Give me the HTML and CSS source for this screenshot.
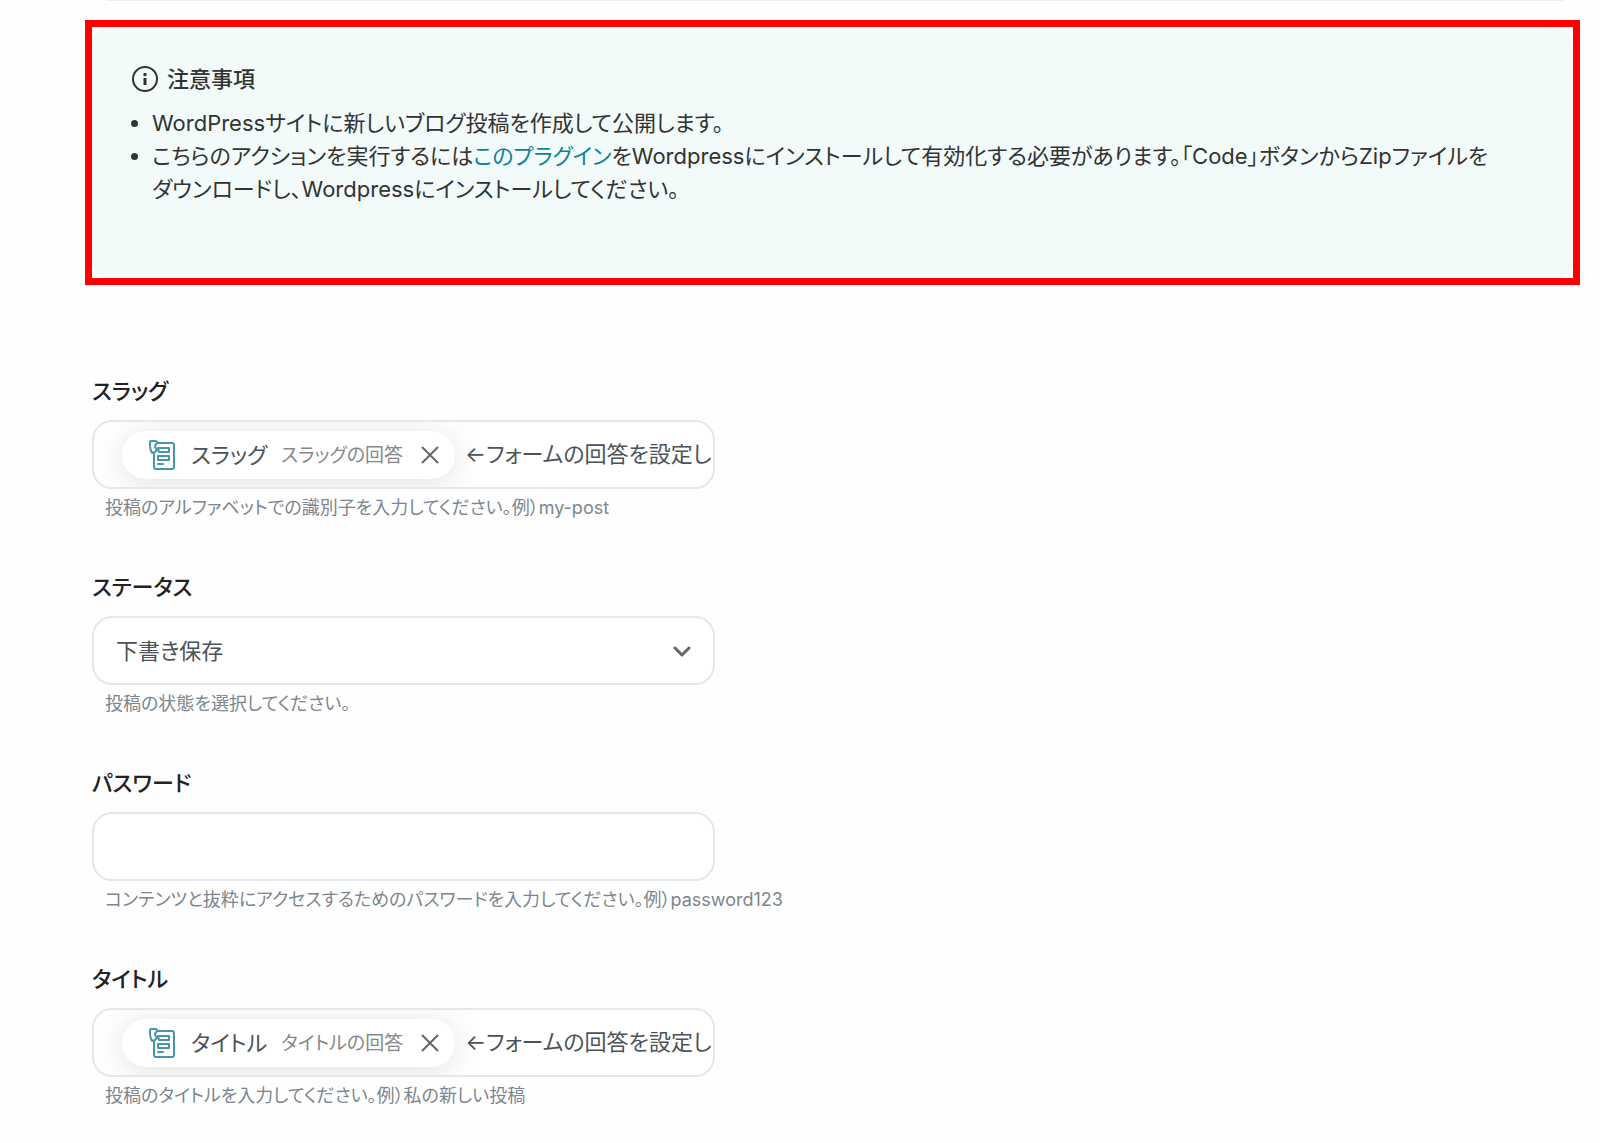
FILE: index.html
```html
<!DOCTYPE html>
<html lang="ja">

<head>
    <meta charset="UTF-8">
    <meta name="viewport" content="width=device-width, initial-scale=1.0">
    <title>WordPress 投稿の作成</title>
    <link rel="stylesheet" href="styles.css">
</head>

<body>
    <div class="divider"></div>
    <main class="content">
        <section class="notice">
            <div class="notice-inner">
                <h2 class="notice-title">
                    <svg class="info-icon" viewBox="0 0 26 26" fill="none" stroke="currentColor" stroke-width="2">
                        <circle cx="13" cy="13" r="12" />
                        <path d="M13 12v7" stroke-width="3" />
                        <path d="M13 7v3" stroke-width="3" />
                    </svg>
                    注意事項
                </h2>
                <ul class="notice-list">
                    <li>WordPressサイトに新しいブログ投稿を作成して公開します。</li>
                    <li>こちらのアクションを実行するには<a href="#">このプラグイン</a>をWordpressにインストールして有効化する必要があります。「Code」ボタンからZipファイルをダウンロードし、Wordpressにインストールしてください。</li>
                </ul>
            </div>
        </section>

        <form class="form">
            <div class="field">
                <label for="slug">スラッグ</label>
                <div class="control">
                    <span class="chip">
                        <svg class="form-icon" viewBox="0 0 26 30" fill="none" stroke="currentColor" stroke-width="2" stroke-linejoin="round" stroke-linecap="round">
                            <path d="M9 3h14q2 0 2 2v22q0 2-2 2H7q-2 0-2-2V14" />
                            <path d="M2 1h4q2 0 2 1v1q-2 2-2 4l2 3-2 2-3 1q-2-3-2-8V2q0-1 1-1z" />
                            <path d="M9 8h11v4H10zM9 16h11v4H9zM9 24h5" />
                        </svg>
                        <span class="chip-name">スラッグ</span>
                        <span class="chip-sub">スラッグの回答</span>
                        <button type="button" class="chip-close" aria-label="削除">
                            <svg viewBox="0 0 18 18" fill="none" stroke="currentColor" stroke-width="2"><path d="M1 1l16 16M17 1L1 17" /></svg>
                        </button>
                    </span>
                    <input type="text" id="slug" class="chip-input" value="←フォームの回答を設定し">
                </div>
                <p class="help">投稿のアルファベットでの識別子を入力してください。例）my-post</p>
            </div>

            <div class="field">
                <label for="status">ステータス</label>
                <div class="control">
                    <select id="status">
                        <option>下書き保存</option>
                    </select>
                    <svg class="chevron" viewBox="0 0 18 12" fill="none" stroke="currentColor" stroke-width="3" stroke-linecap="round" stroke-linejoin="round"><path d="M2 3l7 7 7-7" /></svg>
                </div>
                <p class="help">投稿の状態を選択してください。</p>
            </div>

            <div class="field">
                <label for="password">パスワード</label>
                <div class="control">
                    <input type="text" id="password" class="plain-input">
                </div>
                <p class="help">コンテンツと抜粋にアクセスするためのパスワードを入力してください。例）password123</p>
            </div>

            <div class="field">
                <label for="title">タイトル</label>
                <div class="control">
                    <span class="chip">
                        <svg class="form-icon" viewBox="0 0 26 30" fill="none" stroke="currentColor" stroke-width="2" stroke-linejoin="round" stroke-linecap="round">
                            <path d="M9 3h14q2 0 2 2v22q0 2-2 2H7q-2 0-2-2V14" />
                            <path d="M2 1h4q2 0 2 1v1q-2 2-2 4l2 3-2 2-3 1q-2-3-2-8V2q0-1 1-1z" />
                            <path d="M9 8h11v4H10zM9 16h11v4H9zM9 24h5" />
                        </svg>
                        <span class="chip-name">タイトル</span>
                        <span class="chip-sub">タイトルの回答</span>
                        <button type="button" class="chip-close" aria-label="削除">
                            <svg viewBox="0 0 18 18" fill="none" stroke="currentColor" stroke-width="2"><path d="M1 1l16 16M17 1L1 17" /></svg>
                        </button>
                    </span>
                    <input type="text" id="title" class="chip-input" value="←フォームの回答を設定し">
                </div>
                <p class="help">投稿のタイトルを入力してください。例）私の新しい投稿</p>
            </div>
        </form>
    </main>
</body>

</html>
```
FILE: styles.css
```css
* {
    box-sizing: border-box;
}

body {
    margin: 0;
    background-color: #fefefe;
    color: #333;
    font-family: Inter, "Noto Sans CJK JP", sans-serif;
    font-size: 22px;
    font-feature-settings: "palt";
}

.divider {
    height: 1px;
    margin: 0 36px 19px 106px;
    background-color: #eee;
}

.content {
    padding: 0 20px 0 85px;
}

/* notice */
.notice {
    border: 7px solid #f00;
    background-color: white;
}

.notice-inner {
    padding: 36px 72px 72px 40px;
    border-radius: 16px;
    background-color: #f2fbfa;
}

.notice-title {
    display: flex;
    align-items: center;
    gap: 9px;
    margin: 0 0 12px;
    font-size: 22px;
    font-weight: 500;
    line-height: 32px;
}

.info-icon {
    width: 26px;
    height: 26px;
}

.notice-list {
    margin: 0;
    padding-left: 20px;
    line-height: 33px;
}

.notice-list a {
    color: #12809a;
    text-decoration: none;
}

/* form */
.form {
    padding: 91px 0 0 7px;
}

.field {
    margin-bottom: 49px;
}

.field:last-child {
    margin-bottom: 0;
}

.field label {
    display: block;
    margin-bottom: 13px;
    color: #222;
    font-weight: 500;
    line-height: 31px;
}

.control {
    position: relative;
    display: flex;
    align-items: center;
    width: 100%;
    max-width: 623px;
    height: 69px;
    border: 2px solid #e4e7ec;
    border-radius: 20px;
    background-color: white;
    overflow: hidden;
}

.control input,
.control select {
    flex: 1;
    min-width: 0;
    height: 100%;
    border: none;
    outline: none;
    background: none;
    color: #4b5359;
    font: inherit;
    font-feature-settings: inherit;
}

.control .chip-input {
    padding: 0 0 6px 10px;
}

.control .plain-input {
    padding: 0 22px;
}

.control select {
    padding: 0 60px 0 22px;
    appearance: none;
}

.chevron {
    position: absolute;
    right: 22px;
    width: 18px;
    height: 12px;
    color: #666;
    pointer-events: none;
}

.chip {
    display: flex;
    flex-shrink: 0;
    align-items: center;
    height: 48px;
    margin-left: 28px;
    padding: 0 16px 0 27px;
    border-radius: 24px;
    background-color: white;
    box-shadow: 0 4px 32px rgba(0, 0, 0, 0.12);
    white-space: nowrap;
}

.form-icon {
    width: 26px;
    height: 30px;
    margin-right: 16px;
    color: #4797aa;
}

.chip-name {
    margin-right: 14px;
    padding-bottom: 3px;
    color: #4b5359;
}

.chip-sub {
    margin-right: 18px;
    padding-bottom: 3px;
    color: #888;
    font-size: 19px;
}

.chip-close {
    display: flex;
    padding: 0;
    border: none;
    background: none;
    color: #666;
    cursor: pointer;
}

.chip-close svg {
    width: 18px;
    height: 18px;
}

.help {
    margin: 4px 0 0;
    padding-left: 13px;
    color: #7c868e;
    font-size: 18px;
    line-height: 30px;
}
```
